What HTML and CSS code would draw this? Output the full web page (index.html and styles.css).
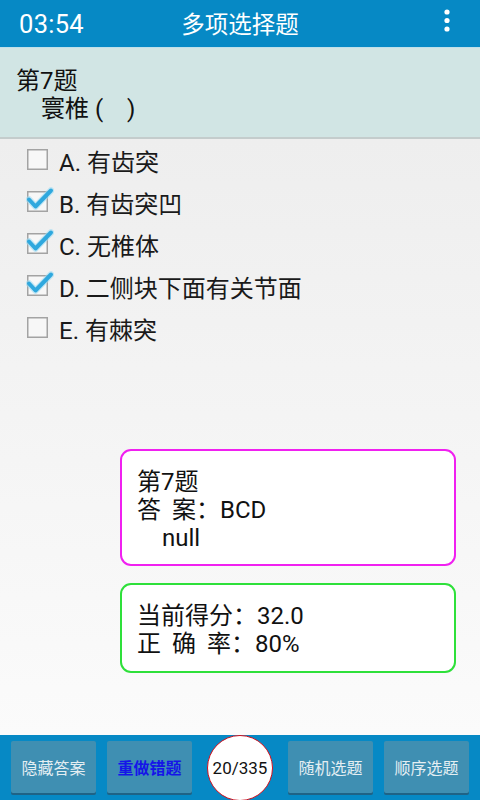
FILE: index.html
```html
<!DOCTYPE html>
<html lang="zh">
<head>
<meta charset="utf-8">
<title>多项选择题</title>
<link rel="stylesheet" href="styles.css">
</head>
<body>
<div class="app">
  <header class="topbar">
    <div class="time">03:54</div>
    <div class="title">多项选择题</div>
    <div class="menu">
      <svg width="8" height="26" viewBox="0 0 8 26"><circle cx="4" cy="3" r="2.6" fill="#fff"/><circle cx="4" cy="11.5" r="2.6" fill="#fff"/><circle cx="4" cy="20" r="2.6" fill="#fff"/></svg>
    </div>
  </header>
  <section class="question">
    <div class="qno">第7题</div>
    <div class="qtext">寰椎 (&nbsp;&nbsp;&nbsp;&nbsp;)</div>
  </section>
  <main class="content">
    <ul class="options">
      <li class="opt">
        <svg class="cb" width="28" height="28" viewBox="0 0 28 28"><rect x="1.75" y="4.75" width="19.5" height="19.5" fill="#f7f7f7" stroke="#a3a3a3" stroke-width="1.5"/></svg>
        <span>A. 有齿突</span>
      </li>
      <li class="opt">
        <svg class="cb" width="28" height="28" viewBox="0 0 28 28"><rect x="1.75" y="4.75" width="19.5" height="19.5" fill="#f7f7f7" stroke="#a3a3a3" stroke-width="1.5"/><path d="M3 12.5 L9.5 19.5 L25 3.5" fill="none" stroke="#9fdcf3" stroke-width="6.5" stroke-linecap="round" stroke-linejoin="round" opacity="0.6"/><path d="M3 12.5 L9.5 19.5 L25 3.5" fill="none" stroke="#2fa8de" stroke-width="4" stroke-linecap="round" stroke-linejoin="round"/></svg>
        <span>B. 有齿突凹</span>
      </li>
      <li class="opt">
        <svg class="cb" width="28" height="28" viewBox="0 0 28 28"><rect x="1.75" y="4.75" width="19.5" height="19.5" fill="#f7f7f7" stroke="#a3a3a3" stroke-width="1.5"/><path d="M3 12.5 L9.5 19.5 L25 3.5" fill="none" stroke="#9fdcf3" stroke-width="6.5" stroke-linecap="round" stroke-linejoin="round" opacity="0.6"/><path d="M3 12.5 L9.5 19.5 L25 3.5" fill="none" stroke="#2fa8de" stroke-width="4" stroke-linecap="round" stroke-linejoin="round"/></svg>
        <span>C. 无椎体</span>
      </li>
      <li class="opt">
        <svg class="cb" width="28" height="28" viewBox="0 0 28 28"><rect x="1.75" y="4.75" width="19.5" height="19.5" fill="#f7f7f7" stroke="#a3a3a3" stroke-width="1.5"/><path d="M3 12.5 L9.5 19.5 L25 3.5" fill="none" stroke="#9fdcf3" stroke-width="6.5" stroke-linecap="round" stroke-linejoin="round" opacity="0.6"/><path d="M3 12.5 L9.5 19.5 L25 3.5" fill="none" stroke="#2fa8de" stroke-width="4" stroke-linecap="round" stroke-linejoin="round"/></svg>
        <span>D. 二侧块下面有关节面</span>
      </li>
      <li class="opt">
        <svg class="cb" width="28" height="28" viewBox="0 0 28 28"><rect x="1.75" y="4.75" width="19.5" height="19.5" fill="#f7f7f7" stroke="#a3a3a3" stroke-width="1.5"/></svg>
        <span>E. 有棘突</span>
      </li>
    </ul>
    <div class="card card-answer">
      <div>第7题</div>
      <div><span class="spaced">答 案</span>：BCD</div>
      <div class="indent">null</div>
    </div>
    <div class="card card-score">
      <div>当前得分：32.0</div>
      <div><span class="spaced">正 确 率</span>：80%</div>
    </div>
  </main>
  <footer class="bottombar">
    <button class="btn">隐藏答案</button>
    <button class="btn btn-active">重做错题</button>
    <div class="counter">20/335</div>
    <button class="btn">随机选题</button>
    <button class="btn">顺序选题</button>
  </footer>
</div>
</body>
</html>
```
FILE: styles.css
```css
* { box-sizing: border-box; }
html, body { margin: 0; padding: 0; }
body {
  width: 480px;
  height: 800px;
  overflow: hidden;
  font-family: "Roboto", "Noto Sans CJK SC", sans-serif;
  color: #111;
}
.app {
  width: 480px;
  height: 800px;
  display: flex;
  flex-direction: column;
}
.topbar {
  height: 47px;
  flex: none;
  background: #0689c5;
  color: #fff;
  display: grid;
  grid-template-columns: 1fr auto 1fr;
  align-items: center;
}
.time {
  padding-left: 19px;
  font-size: 25.5px;
  letter-spacing: 0.3px;
}
.title {
  font-size: 23.5px;
  padding-bottom: 1px;
}
.menu {
  justify-self: end;
  padding-right: 29px;
  display: flex;
  align-items: center;
  padding-bottom: 4px;
}
.menu svg { display: block; }
.question {
  height: 92px;
  flex: none;
  background: #d1e5e4;
  border-top: 1px solid #bfe0ea;
  border-bottom: 2px solid #c4cccc;
  padding: 19px 0 0 16px;
  font-size: 24px;
  line-height: 28px;
}
.qtext { padding-left: 25px; }
.content {
  flex: 1;
  background: linear-gradient(#eeeeee, #fbfbfb);
  display: flex;
  flex-direction: column;
}
.options {
  list-style: none;
  margin: 0;
  padding: 0 0 0 26px;
}
.opt {
  height: 42px;
  display: flex;
  align-items: center;
  gap: 5px;
  font-size: 24px;
  color: #1a1a1a;
}
.cb { display: block; flex: none; margin-top: -3px; }
.card {
  margin: 0 24px 0 120px;
  background: #fff;
  border-radius: 11px;
  border: 2px solid;
  padding: 17px 10px 12px 15px;
  font-size: 24px;
  line-height: 28px;
  color: #111;
}
.card-answer {
  margin-top: 100px;
  border-color: #f020f0;
  height: 117px;
}
.card-score {
  margin-top: 17px;
  border-color: #2ee03a;
  height: 90px;
}
.spaced { word-spacing: 5px; }
.indent { padding-left: 25px; }
.bottombar {
  height: 65px;
  flex: none;
  background: #0689c5;
  display: flex;
  align-items: flex-start;
  padding: 6px 11px 0 11px;
}
.btn {
  width: 85px;
  height: 52px;
  margin: 0;
  border: none;
  border-radius: 2px;
  background: #3f8fb2;
  box-shadow: 0 2px 0 #1f6386;
  color: #e4eef2;
  font-family: "Noto Sans CJK SC", sans-serif;
  font-size: 16px;
  padding: 0;
}
.btn + .btn { margin-left: 11px; }
.btn-active { color: #1515e8; font-weight: bold; }
.counter {
  width: 66px;
  height: 66px;
  margin: -6px 15px 0 15px;
  border-radius: 50%;
  background: #fff;
  border: 1.5px solid #d0101e;
  display: flex;
  align-items: center;
  justify-content: center;
  font-size: 17px;
  color: #111;
  flex: none;
}
```
